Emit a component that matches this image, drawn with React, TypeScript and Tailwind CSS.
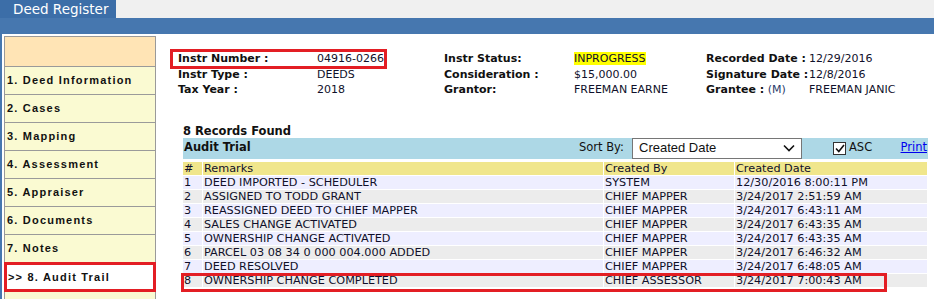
import React from 'react';

const menu = [
  '1. Deed Information',
  '2. Cases',
  '3. Mapping',
  '4. Assessment',
  '5. Appraiser',
  '6. Documents',
  '7. Notes',
];

const rows = [
  { n: 1, remark: 'DEED IMPORTED - SCHEDULER', by: 'SYSTEM', date: '12/30/2016 8:00:11 PM' },
  { n: 2, remark: 'ASSIGNED TO TODD GRANT', by: 'CHIEF MAPPER', date: '3/24/2017 2:51:59 AM' },
  { n: 3, remark: 'REASSIGNED DEED TO CHIEF MAPPER', by: 'CHIEF MAPPER', date: '3/24/2017 6:43:11 AM' },
  { n: 4, remark: 'SALES CHANGE ACTIVATED', by: 'CHIEF MAPPER', date: '3/24/2017 6:43:35 AM' },
  { n: 5, remark: 'OWNERSHIP CHANGE ACTIVATED', by: 'CHIEF MAPPER', date: '3/24/2017 6:43:35 AM' },
  { n: 6, remark: 'PARCEL 03 08 34 0 000 004.000 ADDED', by: 'CHIEF MAPPER', date: '3/24/2017 6:46:32 AM' },
  { n: 7, remark: 'DEED RESOLVED', by: 'CHIEF MAPPER', date: '3/24/2017 6:48:05 AM' },
  { n: 8, remark: 'OWNERSHIP CHANGE COMPLETED', by: 'CHIEF ASSESSOR', date: '3/24/2017 7:00:43 AM' },
];

export default function App() {
  return (
    <div className="w-[934px] h-[299px] overflow-hidden bg-white text-[#10102a]" style={{ fontFamily: '"DejaVu Sans", Verdana, sans-serif' }}>
      {/* Top tab */}
      <div className="flex h-[18px]">
        <div className="w-[116px] bg-[#3c6ea8] text-white text-[13.5px] leading-[18px] pl-[13px]">Deed Register</div>
        <div className="flex-1 bg-[#f0f0f0]" />
      </div>
      <div className="h-[16px] bg-[#4677af]" />

      <div className="flex h-[265px] border-l-2 border-[#4677af]">
        {/* Sidebar */}
        <div
          className="ml-[2px] mt-[2px] w-[152px] border border-[#9a9a9a] bg-[#fafad2] self-start"
          style={{ fontFamily: '"Liberation Sans", Arial, sans-serif' }}
        >
          <div className="h-[30px] bg-[#ffe4b5] border-b border-[#9a9a9a]" />
          {menu.map((m) => (
            <div key={m} className="h-[28px] border-b border-[#9a9a9a] flex items-center pl-[2px] text-[11px] font-bold tracking-[1.2px] text-[#111]">
              {m}
            </div>
          ))}
          <div className="h-[30px] -mx-px -mt-[1px] border-[3px] border-[#e31e24] bg-white flex items-center pl-[1px] text-[11px] font-bold tracking-[1.2px] text-[#111]">
            {'>> 8. Audit Trail'}
          </div>
          <div className="h-[10px]" />
        </div>

        {/* Main */}
        <div className="flex-1 pl-[14px]">
          <div className="relative mt-[17px] ml-[8px] grid grid-cols-[139px_127px_130px_132px_103px_1fr] text-[11px] leading-[15.5px]">
            <div className="absolute left-[-8px] top-[-2px] w-[217px] h-[20px] border-[3px] border-[#e31e24]" />
            <div className="font-bold text-[#111]">Instr Number :</div>
            <div>04916-0266</div>
            <div className="font-bold text-[#111]">Instr Status:</div>
            <div><span className="bg-[#ffff00]">INPROGRESS</span></div>
            <div className="font-bold text-[#111] whitespace-nowrap">Recorded Date :</div>
            <div>12/29/2016</div>

            <div className="font-bold text-[#111]">Instr Type :</div>
            <div>DEEDS</div>
            <div className="font-bold text-[#111]">Consideration :</div>
            <div>$15,000.00</div>
            <div className="font-bold text-[#111] whitespace-nowrap">Signature Date :</div>
            <div>12/8/2016</div>

            <div className="font-bold text-[#111]">Tax Year :</div>
            <div>2018</div>
            <div className="font-bold text-[#111]">Grantor:</div>
            <div className="whitespace-nowrap">FREEMAN EARNE</div>
            <div className="whitespace-nowrap"><span className="font-bold text-[#111]">Grantee :</span> <span className="text-[#2a3a6a]">(M)</span></div>
            <div className="whitespace-nowrap">FREEMAN JANIC</div>
          </div>

          <div className="ml-[13px] mt-[27px] w-[745px]">
            <div className="h-[13px] leading-[13px] text-[11.5px] font-bold text-[#111]">8 Records Found</div>
            <div className="h-[21px] bg-[#add8e6] flex items-center">
              <div className="pl-[1px] text-[11.5px] font-bold text-[#111] w-[396px]">Audit Trial</div>
              <div className="text-[11.5px] text-[#111] w-[53px]">Sort By:</div>
              <div className="h-[21px] w-[170px] bg-white border border-[#767676] flex items-center justify-between pl-[6px] pr-[6px]" style={{ fontFamily: '"Liberation Sans", Arial, sans-serif' }}>
                <span className="text-[13px] text-[#111]">Created Date</span>
                <svg width="12" height="8" viewBox="0 0 12 8"><path d="M1 1.5 L6 6.5 L11 1.5" fill="none" stroke="#111" strokeWidth="1.6" /></svg>
              </div>
              <div className="ml-[31px] w-[13px] h-[13px] border border-[#333] bg-white flex items-center justify-center">
                <svg width="10" height="9" viewBox="0 0 10 9"><path d="M1 4.5 L3.8 7.5 L9 1" fill="none" stroke="#111" strokeWidth="1.6" /></svg>
              </div>
              <div className="ml-[3px] text-[11.5px] text-[#111]">ASC</div>
              <div className="ml-auto pr-[1px] text-[11.5px] text-[#0000ee] underline">Print</div>
            </div>

            <div className="relative mt-[3px] grid grid-cols-[19px_400px_130px_192px] gap-px text-[11.25px] leading-[13px]">
              <div className="bg-[#f0e68c] pl-[1px]">#</div>
              <div className="bg-[#f0e68c] pl-[1px]">Remarks</div>
              <div className="bg-[#f0e68c] pl-[1px]">Created By</div>
              <div className="bg-[#f0e68c] pl-[1px]">Created Date</div>
              {rows.map((r) => {
                const bg = r.n % 2 === 1 ? 'bg-[#eeeeff]' : 'bg-[#ececec]';
                return (
                  <React.Fragment key={r.n}>
                    <div className={`${bg} pl-[1px]`}>{r.n}</div>
                    <div className={`${bg} pl-[1px] whitespace-nowrap`}>{r.remark}</div>
                    <div className={`${bg} pl-[1px] whitespace-nowrap`}>{r.by}</div>
                    <div className={`${bg} pl-[1px] whitespace-nowrap`}>{r.date}</div>
                  </React.Fragment>
                );
              })}
              <div className="absolute left-[-2px] top-[111px] w-[706px] h-[19px] border-[3px] border-[#e31e24]" />
            </div>
          </div>
        </div>
      </div>
    </div>
  );
}
